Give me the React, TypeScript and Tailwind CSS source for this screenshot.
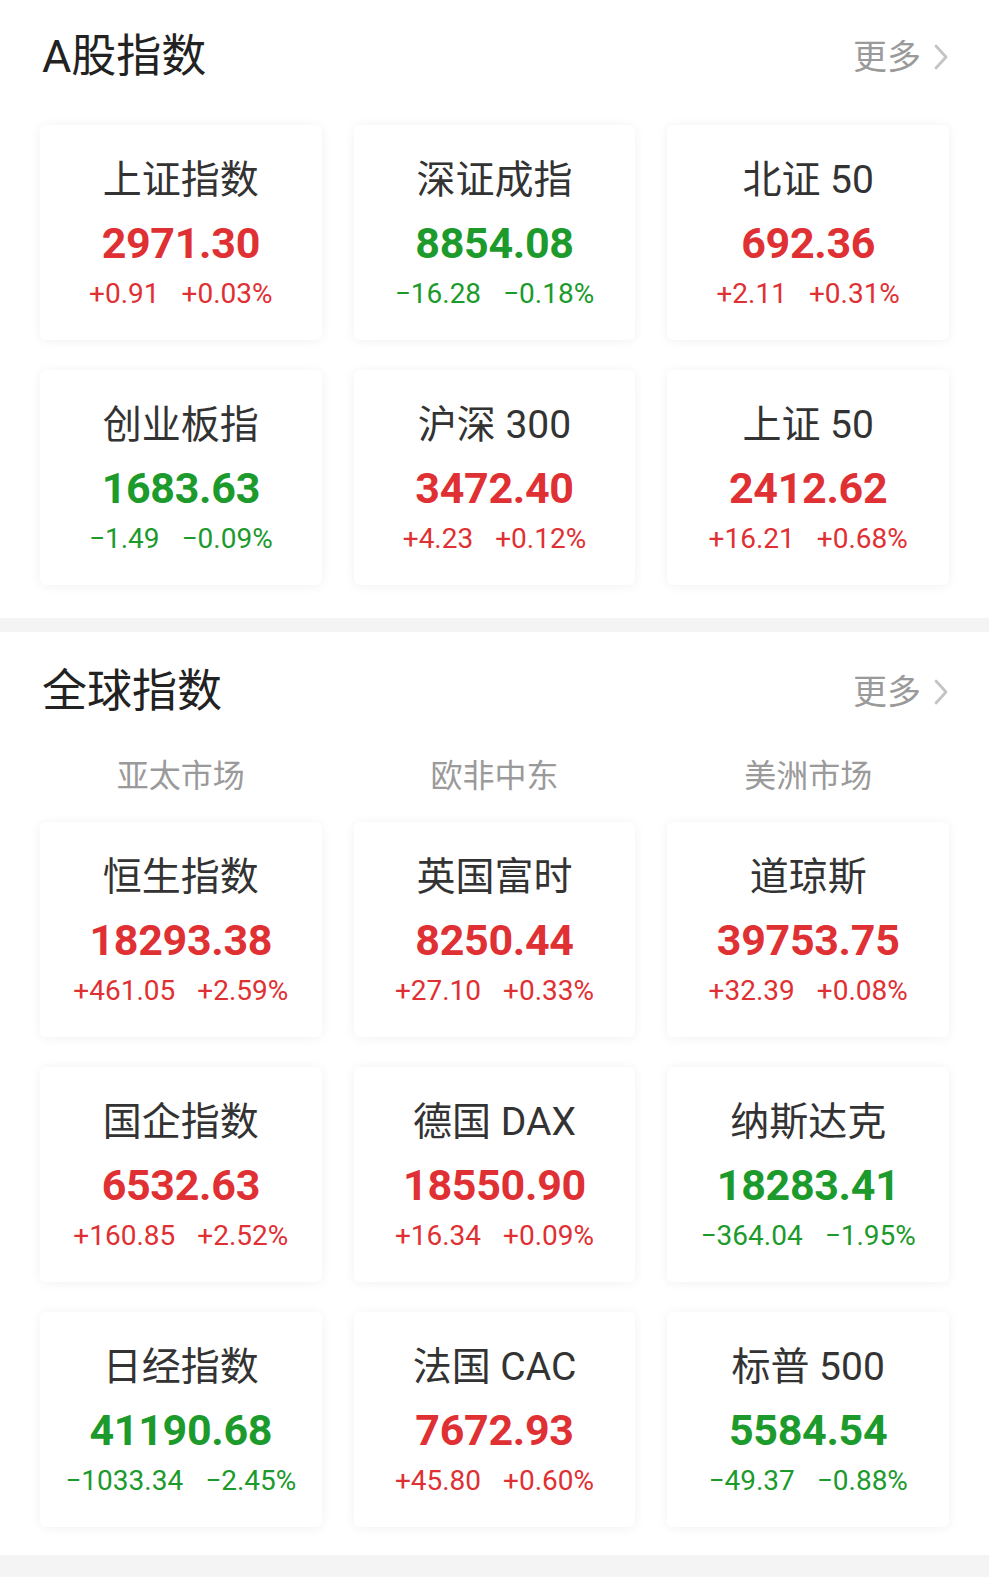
import React from 'react';

type Quote = {
  name: string;
  price: string;
  change: string;
  pct: string;
  up: boolean;
};

const aShares: Quote[] = [
  { name: '上证指数', price: '2971.30', change: '+0.91', pct: '+0.03%', up: true },
  { name: '深证成指', price: '8854.08', change: '-16.28', pct: '-0.18%', up: false },
  { name: '北证 50', price: '692.36', change: '+2.11', pct: '+0.31%', up: true },
  { name: '创业板指', price: '1683.63', change: '-1.49', pct: '-0.09%', up: false },
  { name: '沪深 300', price: '3472.40', change: '+4.23', pct: '+0.12%', up: true },
  { name: '上证 50', price: '2412.62', change: '+16.21', pct: '+0.68%', up: true },
];

const globalIdx: Quote[] = [
  { name: '恒生指数', price: '18293.38', change: '+461.05', pct: '+2.59%', up: true },
  { name: '英国富时', price: '8250.44', change: '+27.10', pct: '+0.33%', up: true },
  { name: '道琼斯', price: '39753.75', change: '+32.39', pct: '+0.08%', up: true },
  { name: '国企指数', price: '6532.63', change: '+160.85', pct: '+2.52%', up: true },
  { name: '德国 DAX', price: '18550.90', change: '+16.34', pct: '+0.09%', up: true },
  { name: '纳斯达克', price: '18283.41', change: '-364.04', pct: '-1.95%', up: false },
  { name: '日经指数', price: '41190.68', change: '-1033.34', pct: '-2.45%', up: false },
  { name: '法国 CAC', price: '7672.93', change: '+45.80', pct: '+0.60%', up: true },
  { name: '标普 500', price: '5584.54', change: '-49.37', pct: '-0.88%', up: false },
];

const SectionHeader: React.FC<{ title: string }> = ({ title }) => (
  <div className="flex items-center justify-between pl-[42px] pr-[40px]">
    <h2 className="text-[45px] leading-[48px] text-[#222]">{title}</h2>
    <div className="flex items-center gap-[12px] text-[34px] leading-[48px] text-[#9a9a9a]">
      更多
      <svg width="16" height="28" viewBox="0 0 16 28" fill="none">
        <path d="M3 3 L13 14 L3 25" stroke="#c4c4c4" strokeWidth="2.8" strokeLinecap="round" strokeLinejoin="round" />
      </svg>
    </div>
  </div>
);

const Card: React.FC<{ q: Quote }> = ({ q }) => {
  const color = q.up ? 'text-[#df3033]' : 'text-[#1c9a2c]';
  return (
    <div className="h-[215px] rounded-[6px] bg-white shadow-[0_1px_12px_rgba(0,0,0,0.06)] flex flex-col items-center pt-[33px]">
      <div className="text-[39px] leading-[44px] text-[#333]">{q.name}</div>
      <div className={`mt-[15px] text-[43px] leading-[52px] font-bold tracking-[-0.3px] ${color}`}>{q.price}</div>
      <div className={`mt-[9px] flex gap-[22px] text-[28px] leading-[32px] ${color}`}>
        <span>{q.change.replace('-', '−')}</span>
        <span>{q.pct.replace('-', '−')}</span>
      </div>
    </div>
  );
};

const Grid: React.FC<{ items: Quote[] }> = ({ items }) => (
  <div className="grid grid-cols-3 gap-x-[32px] gap-y-[30px] px-[40px]">
    {items.map((q) => (
      <Card key={q.name} q={q} />
    ))}
  </div>
);

const App: React.FC = () => {
  return (
    <div
      className="w-full h-screen overflow-hidden bg-white flex flex-col"
      style={{ fontFamily: 'Roboto, "Noto Sans CJK SC", sans-serif' }}
    >
      <section className="pt-[33px] pb-[33px]">
        <SectionHeader title="A股指数" />
        <div className="mt-[44px]">
          <Grid items={aShares} />
        </div>
      </section>

      <div className="h-[14px] shrink-0 bg-[#f4f4f4]" />

      <section className="pt-[36px] pb-[28px]">
        <SectionHeader title="全球指数" />
        <div className="mt-[40px] grid grid-cols-3 gap-x-[32px] px-[40px] text-center text-[32px] leading-[40px] text-[#9a9a9a]">
          <div>亚太市场</div>
          <div>欧非中东</div>
          <div>美洲市场</div>
        </div>
        <div className="mt-[26px]">
          <Grid items={globalIdx} />
        </div>
      </section>

      <div className="flex-1 bg-[#f4f4f4]" />
    </div>
  );
};

export default App;
